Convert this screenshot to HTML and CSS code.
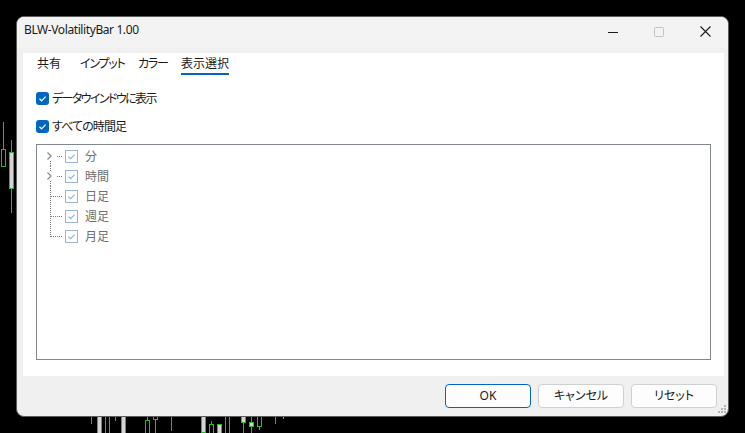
FILE: index.html
```html
<!DOCTYPE html>
<html lang="ja">
<head>
<meta charset="utf-8">
<title>BLW-VolatilityBar 1.00</title>
<link rel="stylesheet" href="styles.css">
</head>
<body>
<svg class="chart" width="745" height="433" viewBox="0 0 745 433">
  <g stroke="#1fc01f" stroke-width="1" fill="none" shape-rendering="crispEdges">
    <line x1="3.5" y1="122" x2="3.5" y2="149"/>
    <rect x="1.5" y="149.5" width="4" height="17" fill="#000"/>
    <line x1="11.5" y1="140" x2="11.5" y2="152"/>
    <rect x="9.5" y="152.5" width="4" height="36" fill="#d4d4d4"/>
    <line x1="11.5" y1="189" x2="11.5" y2="213"/>

    <line x1="91.5" y1="417" x2="91.5" y2="424"/>
    <rect x="97.5" y="415" width="4" height="20" fill="#d4d4d4"/>
    <line x1="105.5" y1="417" x2="105.5" y2="433"/>
    <line x1="109.5" y1="417" x2="109.5" y2="433"/>
    <line x1="115.5" y1="417" x2="115.5" y2="421"/>
    <rect x="121.5" y="415" width="4" height="20" fill="#d4d4d4"/>
    <line x1="147.5" y1="417" x2="147.5" y2="420"/>
    <rect x="145.5" y="420.5" width="4" height="14" fill="#000"/>
    <rect x="153.5" y="415" width="4" height="4.5" fill="#000"/>
    <line x1="155.5" y1="420" x2="155.5" y2="433"/>
    <line x1="171.5" y1="417" x2="171.5" y2="431"/>
    <rect x="201.5" y="415" width="4" height="17.5" fill="#d4d4d4"/>
    <line x1="211.5" y1="421" x2="211.5" y2="424"/>
    <rect x="209.5" y="424.5" width="4" height="10" fill="#000"/>
    <rect x="217.5" y="424.5" width="4" height="10" fill="#d4d4d4"/>
    <line x1="225.5" y1="417" x2="225.5" y2="433"/>
    <line x1="229.5" y1="417" x2="229.5" y2="433"/>
    <rect x="241.5" y="415" width="4" height="7.5" fill="#d4d4d4"/>
    <line x1="243.5" y1="423" x2="243.5" y2="433"/>
    <line x1="251.5" y1="417" x2="251.5" y2="433"/>
    <rect x="249.5" y="422.5" width="4" height="4" fill="#d4d4d4"/>
    <rect x="257.5" y="415" width="4" height="11.5" fill="#000"/>
    <line x1="259.5" y1="427" x2="259.5" y2="430"/>
    <line x1="275.5" y1="417" x2="275.5" y2="424"/>
    <line x1="283.5" y1="417" x2="283.5" y2="419" stroke="#9a9a9a"/>
  </g>
</svg>

<div class="window">
  <div class="titlebar">
    <span class="title">BLW-VolatilityBar 1.00</span>
    <div class="caption-btn">
      <svg width="10" height="10" viewBox="0 0 10 10"><line x1="0" y1="5.5" x2="10" y2="5.5" stroke="#1b1b1b" stroke-width="1"/></svg>
    </div>
    <div class="caption-btn">
      <svg width="10" height="10" viewBox="0 0 10 10"><rect x="0.5" y="0.5" width="9" height="9" rx="1" fill="none" stroke="#c4c4c4" stroke-width="1"/></svg>
    </div>
    <div class="caption-btn">
      <svg width="11" height="11" viewBox="0 0 11 11"><path d="M0.5 0.5 L10.5 10.5 M10.5 0.5 L0.5 10.5" stroke="#1b1b1b" stroke-width="1.1" fill="none"/></svg>
    </div>
  </div>

  <div class="body">
    <div class="panel">
      <div class="tabs">
        <span class="tab t1">共有</span>
        <span class="tab t2 kana">インプット</span>
        <span class="tab t3 kana">カラー</span>
        <span class="tab active">表示選択</span>
      </div>

      <div class="check-row">
        <span class="cbox"><svg width="13" height="13" viewBox="0 0 13 13"><path d="M3.5 6.8 L5.6 8.8 L9.6 4.6" stroke="#fff" stroke-width="1.2" fill="none"/></svg></span>
        <span class="clabel tight">データウインドウに表示</span>
      </div>
      <div class="check-row">
        <span class="cbox"><svg width="13" height="13" viewBox="0 0 13 13"><path d="M3.5 6.8 L5.6 8.8 L9.6 4.6" stroke="#fff" stroke-width="1.2" fill="none"/></svg></span>
        <span class="clabel">すべての時間足</span>
      </div>

      <div class="tree">
        <div class="trow">
          <svg class="gutter" width="28" height="20" viewBox="0 0 28 20">
            <g stroke="#7a7a7a" stroke-width="1" stroke-dasharray="1 1" shape-rendering="crispEdges">
              <line x1="13.5" y1="15" x2="13.5" y2="20"/>
              <line x1="20" y1="10.5" x2="26" y2="10.5"/>
            </g>
            <path d="M10.5 6.5 L14 10 L10.5 13.5" stroke="#8a8a8a" stroke-width="1.3" fill="none"/>
          </svg>
          <span class="tcheck"><svg width="13" height="13" viewBox="0 0 13 13"><path d="M3.4 6.6 L5.6 8.7 L9.6 4.6" stroke="#8db3dc" stroke-width="1.1" fill="none"/></svg></span>
          <span class="tlabel">分</span>
        </div>
        <div class="trow">
          <svg class="gutter" width="28" height="20" viewBox="0 0 28 20">
            <g stroke="#7a7a7a" stroke-width="1" stroke-dasharray="1 1" shape-rendering="crispEdges">
              <line x1="13.5" y1="0" x2="13.5" y2="6"/>
              <line x1="13.5" y1="15" x2="13.5" y2="20"/>
              <line x1="20" y1="10.5" x2="26" y2="10.5"/>
            </g>
            <path d="M10.5 6.5 L14 10 L10.5 13.5" stroke="#8a8a8a" stroke-width="1.3" fill="none"/>
          </svg>
          <span class="tcheck"><svg width="13" height="13" viewBox="0 0 13 13"><path d="M3.4 6.6 L5.6 8.7 L9.6 4.6" stroke="#8db3dc" stroke-width="1.1" fill="none"/></svg></span>
          <span class="tlabel">時間</span>
        </div>
        <div class="trow">
          <svg class="gutter" width="28" height="20" viewBox="0 0 28 20">
            <g stroke="#7a7a7a" stroke-width="1" stroke-dasharray="1 1" shape-rendering="crispEdges">
              <line x1="13.5" y1="0" x2="13.5" y2="20"/>
              <line x1="14" y1="10.5" x2="26" y2="10.5"/>
            </g>
          </svg>
          <span class="tcheck"><svg width="13" height="13" viewBox="0 0 13 13"><path d="M3.4 6.6 L5.6 8.7 L9.6 4.6" stroke="#8db3dc" stroke-width="1.1" fill="none"/></svg></span>
          <span class="tlabel">日足</span>
        </div>
        <div class="trow">
          <svg class="gutter" width="28" height="20" viewBox="0 0 28 20">
            <g stroke="#7a7a7a" stroke-width="1" stroke-dasharray="1 1" shape-rendering="crispEdges">
              <line x1="13.5" y1="0" x2="13.5" y2="20"/>
              <line x1="14" y1="10.5" x2="26" y2="10.5"/>
            </g>
          </svg>
          <span class="tcheck"><svg width="13" height="13" viewBox="0 0 13 13"><path d="M3.4 6.6 L5.6 8.7 L9.6 4.6" stroke="#8db3dc" stroke-width="1.1" fill="none"/></svg></span>
          <span class="tlabel">週足</span>
        </div>
        <div class="trow">
          <svg class="gutter" width="28" height="20" viewBox="0 0 28 20">
            <g stroke="#7a7a7a" stroke-width="1" stroke-dasharray="1 1" shape-rendering="crispEdges">
              <line x1="13.5" y1="0" x2="13.5" y2="11"/>
              <line x1="14" y1="10.5" x2="26" y2="10.5"/>
            </g>
          </svg>
          <span class="tcheck"><svg width="13" height="13" viewBox="0 0 13 13"><path d="M3.4 6.6 L5.6 8.7 L9.6 4.6" stroke="#8db3dc" stroke-width="1.1" fill="none"/></svg></span>
          <span class="tlabel">月足</span>
        </div>
      </div>
    </div>

    <div class="footer">
      <button class="btn primary">OK</button>
      <button class="btn">キャンセル</button>
      <button class="btn">リセット</button>
    </div>
  </div>

  <svg class="grip" width="10" height="10" viewBox="0 0 10 10">
    <g fill="#b4b4b4">
      <rect x="7" y="1" width="2" height="2"/>
      <rect x="4" y="4" width="2" height="2"/><rect x="7" y="4" width="2" height="2"/>
      <rect x="1" y="7" width="2" height="2"/><rect x="4" y="7" width="2" height="2"/><rect x="7" y="7" width="2" height="2"/>
    </g>
  </svg>
</div>
</body>
</html>
```

FILE: styles.css
```css
* { box-sizing: border-box; }

html, body {
  margin: 0;
  padding: 0;
}

body {
  width: 745px;
  height: 433px;
  background: #000;
  position: relative;
  overflow: hidden;
  font-family: "Noto Sans", "Noto Sans CJK JP", sans-serif;
  font-size: 12px;
  color: #1a1a1a;
}

.chart {
  position: absolute;
  left: 0;
  top: 0;
}

.window {
  position: absolute;
  left: 16px;
  top: 16px;
  width: 713px;
  height: 401px;
  border: 1px solid #5c5c5c;
  border-radius: 8px;
  background: #f0f0f0;
  overflow: hidden;
  display: flex;
  flex-direction: column;
}

.titlebar {
  height: 31px;
  flex: none;
  background: #f3f3f3;
  display: flex;
  align-items: stretch;
}

.title {
  flex: 1;
  padding-left: 7px;
  padding-top: 5px;
  line-height: 16px;
  font-size: 12px;
  letter-spacing: -0.4px;
  color: #1a1a1a;
}

.caption-btn {
  width: 46px;
  display: flex;
  align-items: center;
  justify-content: center;
  padding-bottom: 2px;
}

.caption-btn svg { display: block; }

.body {
  flex: 1;
  display: flex;
  flex-direction: column;
  padding: 5px 4px 0 6px;
}

.panel {
  height: 323px;
  background: #fff;
  display: flex;
  flex-direction: column;
  padding-left: 13px;
}

.tabs {
  display: flex;
  padding-left: 1px;
  font-family: "Noto Sans CJK JP", sans-serif;
  font-feature-settings: "palt";
}

.tab {
  padding-top: 2px;
  line-height: 16px;
  padding-bottom: 2px;
  border-bottom: 2px solid transparent;
  white-space: nowrap;
}

.tab.kana { letter-spacing: -1.2px; }
.tab.t1 { width: 43px; }
.tab.t2 { width: 58px; }
.tab.t3 { width: 43px; }

.tab.active {
  border-bottom-color: #0067c0;
}

.check-row {
  height: 20px;
  display: flex;
  align-items: center;
  margin-top: 8px;
}

.tabs + .check-row { margin-top: 13px; }

.cbox {
  width: 13px;
  height: 13px;
  border-radius: 3px;
  background: #0067c0;
  flex: none;
}

.cbox svg, .tcheck svg { display: block; }

.clabel {
  margin-left: 3px;
  font-family: "Noto Sans CJK JP", sans-serif;
  font-feature-settings: "palt";
  line-height: 16px;
  letter-spacing: -0.9px;
}

.clabel.tight { letter-spacing: -1.6px; }

.tree {
  margin-top: 8px;
  width: 675px;
  height: 216px;
  border: 1px solid #828790;
  background: #fff;
  padding-top: 1px;
}

.trow {
  height: 20px;
  display: flex;
  align-items: center;
}

.gutter {
  display: block;
  flex: none;
}

.tcheck {
  width: 13px;
  height: 13px;
  border: 1px solid #9ab4cf;
  background: #fff;
  flex: none;
}

.tcheck svg { margin: -1px 0 0 -1px; }

.tlabel {
  margin-left: 7px;
  color: #6e6e6e;
  font-family: "Noto Sans CJK JP", sans-serif;
  line-height: 16px;
}

.footer {
  flex: 1;
  display: flex;
  justify-content: flex-end;
  align-items: flex-start;
  gap: 7px;
  padding-top: 8px;
  padding-right: 7px;
}

.btn {
  width: 86px;
  height: 24px;
  border: 1px solid #d0d0d0;
  border-radius: 4px;
  background: #fdfdfd;
  font-family: "Noto Sans", "Noto Sans CJK JP", sans-serif;
  font-feature-settings: "palt";
  font-size: 12px;
  color: #1a1a1a;
  padding: 0;
  line-height: 20px;
}

.btn.primary {
  border-color: #0067c0;
}

.grip {
  position: absolute;
  right: 1px;
  bottom: 2px;
}
```
